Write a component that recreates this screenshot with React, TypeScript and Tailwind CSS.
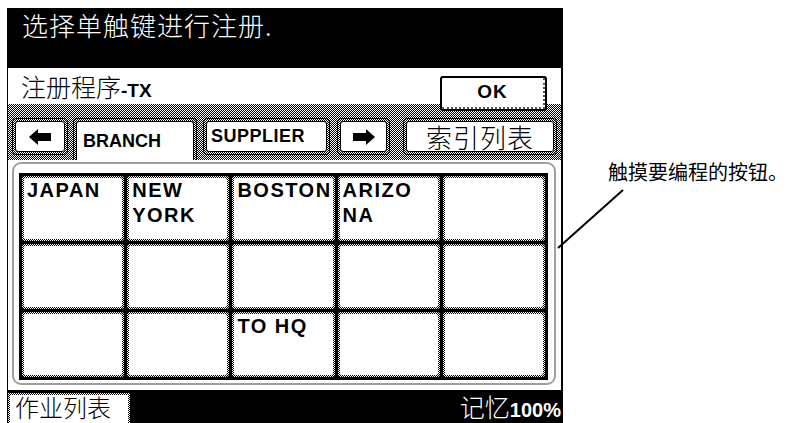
const CJK = "font-['Noto_Sans_CJK_SC',sans-serif]"
const LAT = "font-['Liberation_Sans',sans-serif]"
const CHECK =
  'bg-[image:repeating-conic-gradient(#000_0_25%,#fff_0_50%)] bg-[length:2px_2px]'

const rows: string[][] = [
  ['JAPAN', 'NEW\nYORK', 'BOSTON', 'ARIZO\nNA', ''],
  ['', '', '', '', ''],
  ['', '', 'TO HQ', '', ''],
]

function Arrow({ dir }: { dir: 'left' | 'right' }) {
  return (
    <svg width="22" height="16" viewBox="0 0 22 16" className={dir === 'right' ? 'scale-x-[-1]' : ''}>
      <path d="M0 8 L9 0 L9 4 L22 4 L22 12 L9 12 L9 16 Z" fill="#000" />
    </svg>
  )
}

function Tab({
  w,
  active,
  children,
}: {
  w: string
  active?: boolean
  children: React.ReactNode
}) {
  return (
    <div
      className={`${w} ${active ? 'h-[42px] rounded-t-[4px] border-b-0' : 'h-[37px] rounded-[4px]'} shrink-0 border border-black ${CHECK} p-[2px] ${active ? 'pb-0' : ''}`}
    >
      <div
        className={`flex h-full items-center justify-center bg-white ${active ? 'rounded-t-[3px] border border-b-0' : 'rounded-[3px] border'} border-black`}
      >
        {children}
      </div>
    </div>
  )
}

export default function App() {
  return (
    <div className="relative flex h-[423px] w-[790px] overflow-hidden bg-white pl-[7px] pt-[8px]">
      <div className="flex w-[556px] shrink-0 flex-col border-l border-r-2 border-black">
        <div className={`h-[60px] bg-black pl-[14px] pt-[4px] text-[26px] leading-none tracking-[1px] text-white ${CJK} font-light`}>
          选择单触键进行注册.
        </div>

        <div className="flex h-[36px] items-start justify-between bg-white">
          <div className={`pl-[13px] pt-[6px] text-[25px] leading-none ${CJK} font-light`}>
            注册程序<span className={`${LAT} text-[19px] font-bold`}>-TX</span>
          </div>
          <div className="relative z-10 mr-[14px] mt-[8px] h-[35px] w-[107px] rounded-[3px] border-2 border-black bg-white">
            <div className={`flex h-full items-center justify-center border-b-2 border-r-2 border-dotted border-[#555] ${LAT} text-[19px] font-bold tracking-[1px]`}>
              OK
            </div>
          </div>
        </div>

        <div className={`flex h-[56px] items-start gap-[5px] ${CHECK} pl-[4px] pt-[14px]`}>
          <Tab w="w-[56px]">
            <Arrow dir="left" />
          </Tab>
          <Tab w="w-[124px]" active>
            <span className={`${LAT} w-full pl-[6px] text-[18px] font-bold`}>BRANCH</span>
          </Tab>
          <Tab w="w-[127px] ml-[1px]">
            <span className={`${LAT} w-full pl-[4px] text-[18px] font-bold tracking-[0.5px]`}>SUPPLIER</span>
          </Tab>
          <Tab w="w-[53px] ml-[2px]">
            <Arrow dir="right" />
          </Tab>
          <Tab w="w-[154px] ml-[8px]">
            <span className={`${CJK} font-light text-[26px] leading-none tracking-[1px]`}>索引列表</span>
          </Tab>
        </div>

        <div className="h-[230px] bg-white pt-[2px]">
          <div className="ml-[4px] mr-[5px] h-[223px] rounded-[9px] border-2 border-[#a0a0a0] pb-[3px] pl-[5px] pr-[6px] pt-[9px]">
            <div className="grid h-[207px] grid-cols-5 grid-rows-3 gap-[3px] bg-black p-[3px]">
              {rows.flatMap((r, i) =>
                r.map((label, j) => (
                  <div key={`${i}-${j}`} className={`rounded-[3px] ${CHECK} p-[2px]`}>
                    <div className={`h-full rounded-[2px] bg-white pl-[3px] ${LAT} whitespace-pre text-[20px] font-bold leading-[25px] tracking-[1.5px]`}>
                      {label}
                    </div>
                  </div>
                )),
              )}
            </div>
          </div>
        </div>

        <div className="flex h-[33px] items-start justify-between bg-black">
          <div className={`mt-[3px] h-[30px] w-[122px] ${CHECK} px-[2px] pt-[2px]`}>
            <div className={`h-full bg-white pl-[5px] ${CJK} font-light text-[24px] leading-[24px]`}>
              作业列表
            </div>
          </div>
          <div className="flex items-baseline pt-[3px] text-white">
            <span className={`${CJK} font-light text-[25px] leading-[27px]`}>记忆</span>
            <span className={`${LAT} text-[20px] font-bold leading-[27px]`}>100%</span>
          </div>
        </div>
      </div>

      <div className={`shrink-0 whitespace-nowrap pl-[45px] pt-[154px] text-[20px] leading-none ${CJK}`}>
        触摸要编程的按钮。
      </div>

      <svg className="pointer-events-none absolute left-0 top-0" width="790" height="423">
        <line x1="623" y1="190" x2="558" y2="248" stroke="#000" strokeWidth="2" />
      </svg>
    </div>
  )
}
